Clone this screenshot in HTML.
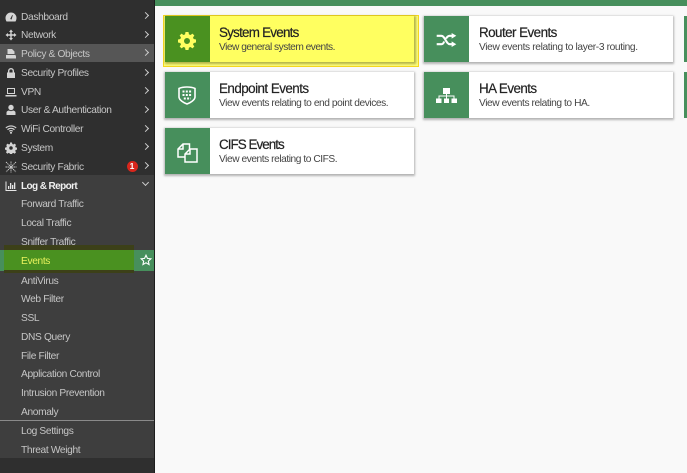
<!DOCTYPE html>
<html><head><meta charset="utf-8">
<style>
html,body{margin:0;padding:0;width:687px;height:473px;overflow:hidden;background:#f9f9f9;font-family:"Liberation Sans",sans-serif}
#side{position:absolute;left:0;top:0;width:154px;height:473px;background:#2f2f2f;border-right:1px solid #1d1d1d}
#sub{position:absolute;left:0;top:175px;width:154px;height:283px;background:#3e3e3e}
.r{position:absolute;left:0;width:154px;height:19px;line-height:19px;font-size:10.2px;letter-spacing:-.35px;color:#c6c6c6;white-space:nowrap}
.r span{position:absolute;left:21px;top:1px}
.r svg{position:absolute;left:5px;top:4px;width:12px;height:12px;fill:#d4d4d4}
.r i{position:absolute;left:142.5px;top:6.5px;width:4px;height:4px;border-top:1.8px solid #ccc;border-right:1.8px solid #ccc;transform:rotate(45deg)}
.c{position:absolute;width:249px;height:46px;background:#fff;box-shadow:0 1px 2px 1px rgba(0,0,0,.28)}
.c .ic{position:absolute;left:0;top:0;width:45px;height:46px;background:#478f5c}
.c svg{position:absolute}
.c b{position:absolute;left:54px;top:8px;font-weight:normal;font-size:13.4px;line-height:18px;letter-spacing:-.6px;color:#222;-webkit-text-stroke:.2px #222;white-space:nowrap}
.c em{position:absolute;left:54px;top:25px;font-style:normal;font-size:10.2px;line-height:14px;letter-spacing:-.42px;color:#444;white-space:nowrap}
</style></head><body>
<div style="position:absolute;left:155px;top:0;width:532px;height:6px;background:#478f5c"></div>
<div id="side">
<div id="sub"></div>

<div class="r" style="top:6.5px"><svg viewBox="0 0 12 12"><path d="M6 1.5a5.5 5.5 0 0 0-5.500 5.500c0 1.500.5 2.600 1 3.500h9c.5-.9 1-2 1-3.500A5.500 5.500 0 0 0 6 1.500zM5.200 8l2-4 .6.3L6.600 8.500z" fill-rule="evenodd"/></svg><span>Dashboard</span><i></i></div>
<div class="r" style="top:25px"><svg viewBox="0 0 12 12"><path d="M6 .5 8 3H6.700v2.300H9V4l2.500 2L9 8V6.700H6.700V9H8l-2 2.500L4 9h1.300V6.700H3V8L.5 6 3 4v1.300h2.300V3H4z"/></svg><span>Network</span><i></i></div>
<div class="r" style="top:43.5px;background:#565656;height:18.5px"><svg viewBox="0 0 12 12"><path d="M2.500 1H7l2.500 2.500V6h-7zM1 7h9.500l.5 1.500v2H1z"/></svg><span>Policy &amp; Objects</span><i></i></div>
<div class="r" style="top:63px"><svg viewBox="0 0 12 12"><path fill-rule="evenodd" d="M2 5.500h1V4a3 3 0 0 1 6 0v1.500h1V11H2zM4.400 5.500h3.200V4a1.600 1.600 0 0 0-3.200 0z"/></svg><span>Security Profiles</span><i></i></div>
<div class="r" style="top:81.5px"><svg viewBox="0 0 12 12"><path fill-rule="evenodd" d="M2 2h8v6H2zM3 3v4h6V3zM.5 9h11v1.500H.5z"/></svg><span>VPN</span><i></i></div>
<div class="r" style="top:100px"><svg viewBox="0 0 12 12"><circle cx="6" cy="3.500" r="2.700"/><path d="M1.500 11V8.500c0-1 1-1.800 2.500-2 .6.400 1.300.600 2 .6s1.400-.2 2-.6c1.500.2 2.500 1 2.500 2V11z"/></svg><span>User &amp; Authentication</span><i></i></div>
<div class="r" style="top:119px"><svg viewBox="0 0 12 12" style="fill:none;stroke:#d4d4d4;stroke-width:1.100"><path d="M.8 5a7.500 7.500 0 0 1 10.400 0M2.500 6.700a5 5 0 0 1 7 0M4.200 8.300a2.500 2.500 0 0 1 3.600 0"/><circle cx="6" cy="9.800" r=".5"/></svg><span>WiFi Controller</span><i></i></div>
<div class="r" style="top:137.5px"><svg viewBox="0 0 24 24"><path fill-rule="evenodd" d="M10 1h4l.6 3 2.100.9 2.600-1.700 2.800 2.800-1.700 2.600.9 2.100 3 .6v4l-3 .6-.9 2.100 1.700 2.600-2.800 2.800-2.600-1.700-2.100.9-.6 3h-4l-.6-3-2.100-.9-2.600 1.700-2.800-2.800 1.700-2.600-.9-2.100-3-.6v-4l3-.6.9-2.100L2.500 6l2.800-2.800 2.600 1.700 2.100-.9zM12 8.500a3.500 3.500 0 1 0 0 7 3.500 3.500 0 0 0 0-7z"/></svg><span>System</span><i></i></div>
<div class="r" style="top:156.5px"><svg viewBox="0 0 12 12" style="fill:none;stroke:#d4d4d4;stroke-width:.9;stroke-dasharray:1.400 .6"><path d="M1 1l10 10M11 1 1 11M6 .5v11M.5 6h11"/></svg><span>Security Fabric</span><i></i></div>
<div style="position:absolute;left:126.500px;top:160.500px;width:11px;height:11px;border-radius:50%;background:#d9261c;color:#fff;font-size:8.5px;font-weight:bold;line-height:11px;text-align:center">1</div>

<div class="r" style="top:175.5px;color:#f0f0f0;font-weight:bold;font-size:10px;letter-spacing:-.6px"><svg viewBox="0 0 12 12" style="fill:#e6e6e6"><path d="M.5 1.500h1V10h10v1H.5zM3 6h1.300v3H3zM5 3h1.300v6H5zM7 5h1.300v4H7zM9 2.500h1.300V9H9z"/></svg><span>Log &amp; Report</span><i style="top:4.500px;transform:rotate(135deg)"></i></div>

<div class="r" style="top:194px"><span>Forward Traffic</span></div>
<div class="r" style="top:212.5px"><span>Local Traffic</span></div>
<div class="r" style="top:231.5px"><span>Sniffer Traffic</span></div>
<div style="position:absolute;left:0;top:250px;width:154px;height:21px;background:#478f5c"></div>
<div style="position:absolute;left:4px;top:245px;width:130px;height:28px;background:#4a9120"></div>
<div style="position:absolute;left:4px;top:245px;width:130px;height:5px;background:#3c4018"></div>
<div style="position:absolute;left:4px;top:270px;width:130px;height:3px;background:#3c4018"></div>
<div class="r" style="top:251px;color:#e9f25c"><span>Events</span></div>
<svg style="position:absolute;left:140px;top:254px;width:12px;height:12px" viewBox="0 0 24 24" fill="none" stroke="#fff" stroke-width="2.200"><path d="M12 2.500l2.900 6.300 6.900.8-5.100 4.700 1.400 6.800-6.100-3.500-6.100 3.500 1.400-6.800-5.100-4.700 6.900-.8z"/></svg>
<div class="r" style="top:270.5px"><span>AntiVirus</span></div>
<div class="r" style="top:289px"><span>Web Filter</span></div>
<div class="r" style="top:307.5px"><span>SSL</span></div>
<div class="r" style="top:326.5px"><span>DNS Query</span></div>
<div class="r" style="top:345.5px"><span>File Filter</span></div>
<div class="r" style="top:364px"><span>Application Control</span></div>
<div class="r" style="top:383px"><span>Intrusion Prevention</span></div>
<div class="r" style="top:401.5px"><span>Anomaly</span></div>
<div style="position:absolute;left:0;top:420px;width:154px;height:1px;background:#8a8a8a"></div>
<div class="r" style="top:421px"><span>Log Settings</span></div>
<div class="r" style="top:440px"><span>Threat Weight</span></div>
</div>

<div style="position:absolute;left:163px;top:15px;width:254px;height:50px;background:#fdfd78;border:1px solid #f5d820"></div>
<div class="c" style="left:165px;top:16px;background:#ffff60;box-shadow:1px 1px 2px 1px rgba(110,110,30,.5)"><div class="ic" style="background:#4a9120"></div>
<svg viewBox="0 0 24 24" style="left:13px;top:16px;width:18px;height:18px"><path fill="#ffff60" fill-rule="evenodd" d="M10 0h4l.6 3.100 2.100.9 2.600-1.800 2.500 2.500-1.800 2.600.9 2.100 3.100.6v4l-3.100.6-.9 2.100 1.800 2.600-2.500 2.500-2.600-1.800-2.100.9L14 24h-4l-.6-3.100-2.100-.9-2.600 1.800-2.500-2.500 1.800-2.600-.9-2.100L0 14v-4l3.100-.6.9-2.100-1.800-2.600 2.500-2.500 2.600 1.800 2.100-.9zM12 8a4 4 0 1 0 0 8 4 4 0 0 0 0-8z"/></svg>
<b style="letter-spacing:-.75px">System Events</b><em style="letter-spacing:-.5px">View general system events.</em></div>

<div class="c" style="left:424px;top:16px"><div class="ic"></div>
<svg viewBox="0 0 21 15" style="left:12px;top:17px;width:21px;height:14px" fill="none" stroke="#fff" stroke-width="2.200"><path d="M0 3h5c4 0 5 9 9 9h3M0 12h5c1.500 0 2.500-1.500 3-3M10 6c1-1.800 2-3 4-3h3"/><path fill="#fff" stroke="none" d="M16 0l5 3-5 3zM16 9l5 3-5 3z"/></svg>
<b style="left:55px;letter-spacing:-.54px">Router Events</b><em style="left:55px;letter-spacing:-.36px">View events relating to layer-3 routing.</em></div>

<div class="c" style="left:165px;top:72px"><div class="ic"></div>
<svg viewBox="0 0 18 19" style="left:13px;top:14px;width:18px;height:19px" fill="none" stroke="#fff" stroke-width="1.600"><path d="M1 2.500C5 .5 13 .5 17 2.500V11c0 3-5 6-8 7-3-1-8-4-8-7z"/><path stroke-width="2" stroke-dasharray="2 1.300" d="M4.500 5.500h9.500M4.500 9h9.500M5.800 12.500h7"/></svg>
<b style="letter-spacing:-.53px">Endpoint Events</b><em style="letter-spacing:-.43px">View events relating to end point devices.</em></div>

<div class="c" style="left:424px;top:72px"><div class="ic"></div>
<svg viewBox="0 0 21 15" style="left:12px;top:16px;width:21px;height:15px" fill="#fff"><path d="M7 0h7v6h-3v1.500h7.500V10.500H21V15h-5.500v-4.500h2V8.500H11v2h2V15H8v-4.500h2v-2H3.500v2h2V15H0v-4.500h2.500v-3H10V6H7z"/></svg>
<b style="left:55px;letter-spacing:-.55px">HA Events</b><em style="left:55px;letter-spacing:-.42px">View events relating to HA.</em></div>

<div class="c" style="left:165px;top:128px"><div class="ic"></div>
<svg viewBox="0 0 21 20" style="left:12px;top:15px;width:21px;height:20px" fill="none" stroke="#fff" stroke-width="1.500"><path d="M7.500 14H1V6l5-5h6.500v5"/><path d="M1 6h5V1"/><path fill="#478f5c" d="M13 6h7v13H8V11z"/><path d="M8 11h5V6"/></svg>
<b style="letter-spacing:-.95px">CIFS Events</b><em style="letter-spacing:-.45px">View events relating to CIFS.</em></div>

<div style="position:absolute;left:684px;top:16px;width:3px;height:46px;background:#478f5c"></div>
<div style="position:absolute;left:684px;top:72px;width:3px;height:46px;background:#478f5c"></div>
</body></html>
